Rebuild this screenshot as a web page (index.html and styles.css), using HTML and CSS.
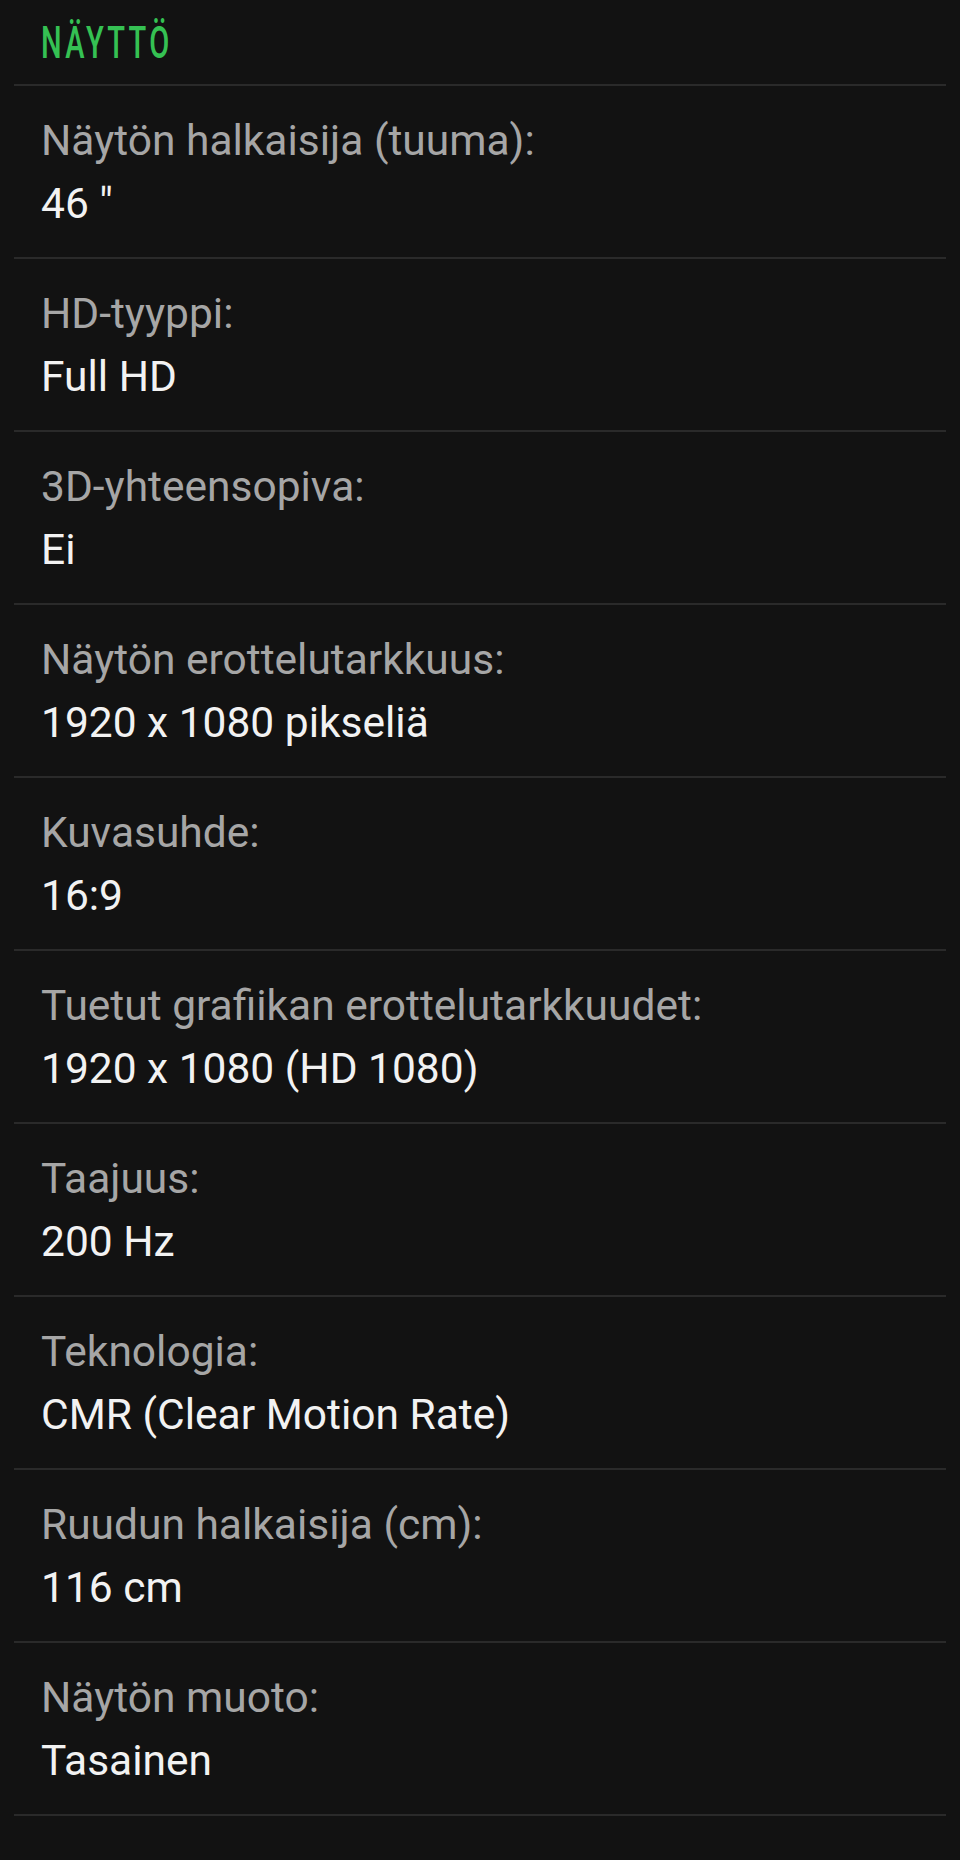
FILE: index.html
```html
<!DOCTYPE html>
<html lang="fi">
<head>
    <meta charset="UTF-8">
    <title>Näyttö</title>
    <link rel="stylesheet" href="styles.css">
</head>
<body>

    <section class="specs">
        <h2 class="specs-title"><span>Näyttö</span></h2>

        <dl class="spec-list">
            <div class="spec">
                <dt>Näytön halkaisija (tuuma):</dt>
                <dd>46 "</dd>
            </div>
            <div class="spec">
                <dt>HD-tyyppi:</dt>
                <dd>Full HD</dd>
            </div>
            <div class="spec">
                <dt>3D-yhteensopiva:</dt>
                <dd>Ei</dd>
            </div>
            <div class="spec">
                <dt>Näytön erottelutarkkuus:</dt>
                <dd>1920 x 1080 pikseliä</dd>
            </div>
            <div class="spec">
                <dt>Kuvasuhde:</dt>
                <dd>16:9</dd>
            </div>
            <div class="spec">
                <dt>Tuetut grafiikan erottelutarkkuudet:</dt>
                <dd>1920 x 1080 (HD 1080)</dd>
            </div>
            <div class="spec">
                <dt>Taajuus:</dt>
                <dd>200 Hz</dd>
            </div>
            <div class="spec">
                <dt>Teknologia:</dt>
                <dd>CMR (Clear Motion Rate)</dd>
            </div>
            <div class="spec">
                <dt>Ruudun halkaisija (cm):</dt>
                <dd>116 cm</dd>
            </div>
            <div class="spec">
                <dt>Näytön muoto:</dt>
                <dd>Tasainen</dd>
            </div>
        </dl>
    </section>

</body>
</html>
```

FILE: styles.css
```css
HTML {
    background: #121212;
    }
BODY {
    margin: 0;
    font: 42.5px/63px Roboto, "Liberation Sans", sans-serif;
    color: #f2f2f2;
    background: #121212;
    }
.specs {
    margin: 0 14px;
    }
.specs-title {
    margin: 0;
    padding: 21px 27px 19px;
    border-bottom: 2px solid #2a2a2a;
    font-size: 44px;
    font-weight: 500;
    line-height: 44px;
    color: #35c153;
    }
    .specs-title SPAN {
        display: inline-block;
        transform: scaleX(.66);
        transform-origin: left center;
        letter-spacing: 5px;
        text-transform: uppercase;
        }
.spec-list {
    margin: 0;
    }
.spec {
    padding: 23px 27px 22px;
    border-bottom: 2px solid #2a2a2a;
    }
    .spec DT {
        color: #a6a6a6;
        }
    .spec DD {
        margin: 0;
        color: #f2f2f2;
        }
```
